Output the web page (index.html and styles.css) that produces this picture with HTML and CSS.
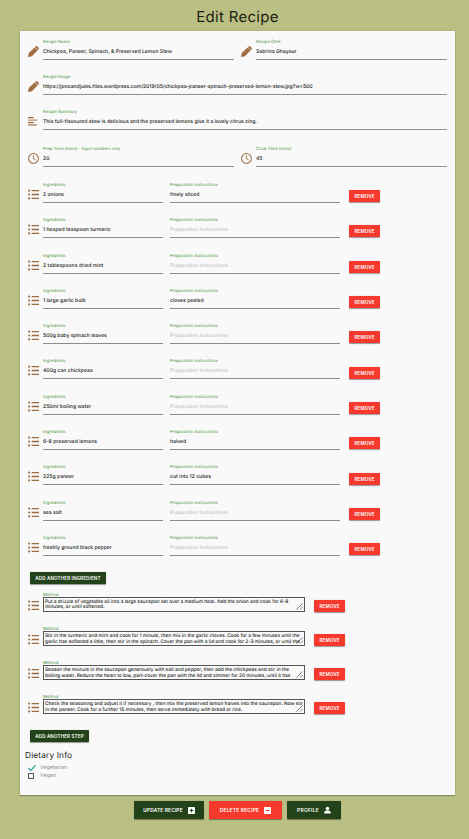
FILE: index.html
```
<!DOCTYPE html>
<html lang="en">
<head>
<meta charset="utf-8">
<title>Edit Recipe</title>
<link rel="stylesheet" href="styles.css">
</head>
<body>
<svg width="0" height="0" class="defs">
  <symbol id="pencil" viewBox="0 0 24 24"><path d="M0 24l1.500-8.500L14.500 3l6.500 6.500L8.500 22.500zM16 1.500q2.500-2.500 5 0l1.500 1.500q2.500 2.500 0 5l-.8.8L15.200 2.300z"/><path d="M5.500 16.500L15 7" fill="none" stroke="#c49a78" stroke-width=".8"/></symbol>
  <symbol id="lines" viewBox="0 0 24 24"><path d="M0 0h15v3.500H0zM0 13h15v3.500H0z"/><path d="M0 6.500h24V10H0zM0 19.500h24V23H0z" opacity=".75"/></symbol>
  <symbol id="clock" viewBox="0 0 24 24"><circle cx="12" cy="12" r="10.700" fill="none" stroke="currentColor" stroke-width="2.200"/><path d="M12 5v7.500l5 3" fill="none" stroke="currentColor" stroke-width="2"/></symbol>
  <symbol id="list" viewBox="0 0 24 24"><circle cx="2.500" cy="3.500" r="2.300"/><circle cx="2.500" cy="12" r="2.300"/><circle cx="2.500" cy="20.500" r="2.300"/><path d="M8 2.100h16v2.800H8zM8 10.600h16v2.800H8zM8 19.100h16v2.800H8z"/></symbol>
  <symbol id="plus" viewBox="0 0 24 24"><path fill-rule="evenodd" d="M3 0h18q3 0 3 3v18q0 3-3 3H3q-3 0-3-3V3q0-3 3-3zM10 6v4H6v4h4v4h4v-4h4v-4h-4V6z"/></symbol>
  <symbol id="minus" viewBox="0 0 24 24"><path fill-rule="evenodd" d="M3 0h18q3 0 3 3v18q0 3-3 3H3q-3 0-3-3V3q0-3 3-3zM6 10v4h12v-4z"/></symbol>
  <symbol id="user" viewBox="0 0 24 24"><circle cx="12" cy="6.500" r="6"/><path d="M1 24v-4q1-5 8-6h6q7 1 8 6v4z"/></symbol>
  <symbol id="grip" viewBox="0 0 8 8"><path d="M.5 7.500l7-7M4.500 7.500l3-3" fill="none" stroke="#444" stroke-width=".8"/></symbol>
</svg>
<h1>Edit Recipe</h1>
<main class="panel">
  <div class="row wide">
    <svg class="icon"><use href="#pencil"/></svg><div class="field half"><label>Recipe Name</label><p>Chickpea, Paneer, Spinach, &amp; Preserved Lemon Stew</p></div>
    <svg class="icon"><use href="#pencil"/></svg><div class="field half"><label>Recipe Chef</label><p>Sabrina Ghayour</p></div>
  </div>
  <div class="row wide">
    <svg class="icon"><use href="#pencil"/></svg><div class="field full"><label>Recipe Image</label><p class="url">https://jonoandjules.files.wordpress.com/2019/05/chickpea-paneer-spinach-preserved-lemon-stew.jpg?w=500</p></div>
  </div>
  <div class="row wide">
    <svg class="icon lines"><use href="#lines"/></svg><div class="field full"><label>Recipe Summary</label><p class="summary">This full-flavoured stew is delicious and the preserved lemons give it a lovely citrus zing.</p></div>
  </div>
  <div class="row wide times">
    <svg class="icon"><use href="#clock"/></svg><div class="field half"><label>Prep Time (mins) - Input numbers only</label><p>20</p></div>
    <svg class="icon"><use href="#clock"/></svg><div class="field half"><label>Cook Time (mins)</label><p>45</p></div>
  </div>
  <div id="ingredients"></div>
  <button class="btn add-ingredient">ADD ANOTHER INGREDIENT</button>
  <div id="steps"></div>
  <button class="btn add-step">ADD ANOTHER STEP</button>
  <h2>Dietary Info</h2>
  <div class="check"><svg class="tick" viewBox="0 0 8 8"><path d="M.5 4l2.300 2.700L7.500 1.200" fill="none" stroke="#26a69a" stroke-width="1.200"/></svg><span>Vegetarian</span></div>
  <div class="check"><i class="box"></i><span>Vegan</span></div>
</main>
<footer>
  <button class="btn big update"><span>UPDATE RECIPE</span><svg><use href="#plus"/></svg></button>
  <button class="btn big red delete"><span>DELETE RECIPE</span><svg><use href="#minus"/></svg></button>
  <button class="btn big profile"><span>PROFILE</span><svg class="user"><use href="#user"/></svg></button>
</footer>
<script src="script.js"></script>
</body>
</html>
```
FILE: styles.css
```
* { box-sizing: border-box; }
body { margin: 0; height: 839px; overflow: hidden; background: #bac083; font-family: Inter, sans-serif; color: #222; text-rendering: geometricPrecision; }
.defs { position: absolute; }
h1 { margin: 0; height: 31px; padding-top: 7px; padding-left: 6px; line-height: 20px; font-size: 15px; font-weight: 400; text-align: center; letter-spacing: .3px; color: #1d1d12; }
.panel { width: 435px; height: 764px; margin-left: 20px; padding-top: 7px; background: #f9f9f9; box-shadow: 0 1px 1px rgba(0,0,0,.25), 0 0 2px rgba(0,0,0,.15); }
.row { display: flex; height: 35.300px; padding-left: 8px; }
.row.wide { height: 35.200px; }
.row.times { height: 37.400px; padding-top: 1.400px; }
.icon { width: 11px; height: 11px; margin: 8px 4px 0 0; color: #9c6b42; fill: #9c6b42; flex: none; }
.icon.lines { width: 9px; height: 9px; margin-right: 6px; margin-top: 9px; }
.field { height: 22px; border-bottom: 1px solid #8d8d8d; white-space: nowrap; }
.field label { display: block; height: 7px; line-height: 9px; font-size: 4.250px; color: #409330; }
.field p { margin: 3px 0 0; line-height: 9.400px; font-size: 5.100px; font-weight: 500; }
.field p.url { letter-spacing: -.04px; }
.field p.summary { letter-spacing: -.015px; }
.half { width: 191px; margin-right: 7px; }
.full { width: 404px; }
.ing { width: 120px; margin-right: 7px; }
.prep { width: 170px; margin-right: 9px; }
.field p.empty { color: #b5b5b5; font-weight: 400; font-size: 5.150px; }
.btn { display: flex; align-items: center; justify-content: center; border: 0; padding: 0; width: 31px; height: 12px; border-radius: 1px; background: #22431a; color: #fff; font: 600 4.600px Inter, sans-serif; letter-spacing: .12px; white-space: nowrap; box-shadow: 0 .7px 1px rgba(0,0,0,.4); }
.red { background: #f5392d; }
.row .btn { margin-top: 9.200px; padding-top: 1px; }
.add-ingredient { width: 76px; margin: 2.500px 0 0 10px; }
#steps { padding-top: 8px; height: 146px; }
.step { display: flex; height: 34.200px; padding-left: 8px; }
.step .icon { margin-top: 8px; }
.method { width: 262px; margin-right: 9px; }
.method label { display: block; height: 5px; font-size: 4.250px; line-height: 7px; color: #409330; }
.area { position: relative; height: 15px; border: 1px solid #555; padding: 2px 0 0 1px; overflow: hidden; white-space: pre; font-size: 4.800px; line-height: 5.700px; font-weight: 500; letter-spacing: -.01px; }
.area svg { position: absolute; right: 1px; bottom: 1px; width: 7px; height: 7px; }
.step .btn { margin-top: 8px; }
.add-ingredient, .add-step, .step .btn { padding-top: 1px; }
.add-step { width: 59px; margin-left: 10px; }
h2 { margin: 7px 0 2px 5px; padding-top: 2px; font-size: 8.300px; line-height: 11px; font-weight: 400; letter-spacing: .15px; }
.check { display: flex; align-items: center; height: 8px; margin-left: 8px; font-size: 5.300px; color: #8e8e8e; }
.check .tick { width: 8px; height: 8px; margin-right: 4px; }
.check .box { width: 6px; height: 6px; border: 1px solid #555; margin-right: 6px; }
footer { display: flex; gap: 5px; padding: 6px 0 0 134px; }
.big { height: 18px; font-size: 4.900px; gap: 5px; }
.big svg { width: 7px; height: 7px; fill: #fff; }
.big svg.user { width: 7px; height: 8px; }
.update { width: 70px; }
.delete { width: 73px; letter-spacing: .2px; }
.profile { width: 54px; letter-spacing: .25px; }
```
FILE: script.js
```
const ingredients = [
  ['2 onions', 'finely sliced'], ['1 heaped teaspoon turmeric', ''], ['2 tablespoons dried mint', ''],
  ['1 large garlic bulb', 'cloves peeled'], ['500g baby spinach leaves', ''], ['400g can chickpeas', ''],
  ['250ml boiling water', ''], ['6-8 preserved lemons', 'halved'], ['225g paneer', 'cut into 12 cubes'],
  ['sea salt', ''], ['freshly ground black pepper', '']
];
const steps = [
  'Put a drizzle of vegetable oil into a large saucepan set over a medium heat. Add the onion and cook for 6-8\nminutes, or until softened.',
  'Stir in the turmeric and mint and cook for 1 minute, then mix in the garlic cloves. Cook for a few minutes until the\ngarlic has softened a little, then stir in the spinach. Cover the pan with a lid and cook for 2-3 minutes, or until the',
  'Season the mixture in the saucepan generously with salt and pepper, then add the chickpeas and stir in the\nboiling water. Reduce the heart to low, part-cover the pan with the lid and simmer for 20 minutes, until it has',
  'Check the seasoning and adjust it if necessary , then mix the preserved lemon halves into the saucepan. Now stir\nin the paneer. Cook for a further 15 minutes, then serve immediately with bread or rice.'
];
const icon = '<svg class="icon"><use href="#list"/></svg>';
const remove = '<button class="btn red">REMOVE</button>';
document.getElementById('ingredients').innerHTML = ingredients.map(([name, prep]) =>
  `<div class="row">${icon}<div class="field ing"><label>Ingredients</label><p>${name}</p></div>` +
  `<div class="field prep"><label>Preparation Instructions</label><p class="${prep ? '' : 'empty'}">${prep || 'Preparation Instructions'}</p></div>${remove}</div>`).join('');
document.getElementById('steps').innerHTML = steps.map(text =>
  `<div class="step">${icon}<div class="method"><label>Method</label><div class="area">${text}<svg><use href="#grip"/></svg></div></div>${remove}</div>`).join('');
```
